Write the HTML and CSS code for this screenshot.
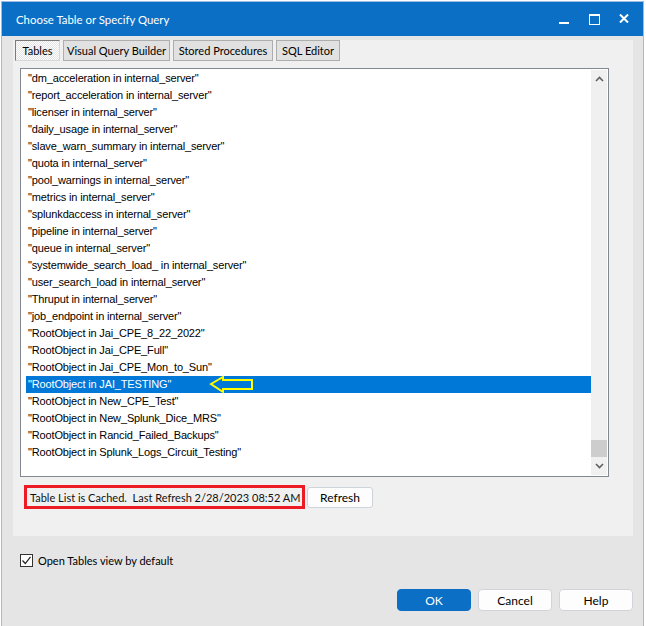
FILE: index.html
```html
<!DOCTYPE html>
<html lang="en">
<head>
    <meta charset="UTF-8">
    <meta name="viewport" content="width=device-width, initial-scale=1.0">
    <title>Choose Table or Specify Query</title>
    <link rel="stylesheet" href="styles.css">
</head>
<body>
    <div class="window">
        <div class="titlebar">
            <span class="title">Choose Table or Specify Query</span>
            <div class="controls">
                <span class="ctl ctl-min"></span>
                <span class="ctl ctl-max"></span>
                <span class="ctl ctl-close">
                    <svg width="10" height="9" viewBox="0 0 10 9">
                        <path d="M1 0.5 L9 8.5 M9 0.5 L1 8.5" stroke="#fff" stroke-width="2" fill="none"/>
                    </svg>
                </span>
            </div>
        </div>

        <div class="body">
            <div class="panel">
                <div class="tabs">
                    <button class="tab active">Tables</button>
                    <button class="tab tab-vqb">Visual Query Builder</button>
                    <button class="tab tab-sp">Stored Procedures</button>
                    <button class="tab tab-sql">SQL Editor</button>
                </div>

                <div class="listbox">
                    <ul class="items">
                        <li>"dm_acceleration in internal_server"</li>
                        <li>"report_acceleration in internal_server"</li>
                        <li>"licenser in internal_server"</li>
                        <li>"daily_usage in internal_server"</li>
                        <li>"slave_warn_summary in internal_server"</li>
                        <li>"quota in internal_server"</li>
                        <li>"pool_warnings in internal_server"</li>
                        <li>"metrics in internal_server"</li>
                        <li>"splunkdaccess in internal_server"</li>
                        <li>"pipeline in internal_server"</li>
                        <li>"queue in internal_server"</li>
                        <li>"systemwide_search_load_ in internal_server"</li>
                        <li>"user_search_load in internal_server"</li>
                        <li>"Thruput in internal_server"</li>
                        <li>"job_endpoint in internal_server"</li>
                        <li>"RootObject in Jai_CPE_8_22_2022"</li>
                        <li>"RootObject in Jai_CPE_Full"</li>
                        <li>"RootObject in Jai_CPE_Mon_to_Sun"</li>
                        <li class="selected">"RootObject in JAI_TESTING"</li>
                        <li>"RootObject in New_CPE_Test"</li>
                        <li>"RootObject in New_Splunk_Dice_MRS"</li>
                        <li>"RootObject in Rancid_Failed_Backups"</li>
                        <li>"RootObject in Splunk_Logs_Circuit_Testing"</li>
                    </ul>
                    <div class="scrollbar">
                        <svg class="chev" width="9" height="6" viewBox="0 0 9 6">
                            <path d="M1 5 L4.5 1.5 L8 5" stroke="#606060" stroke-width="1.6" fill="none"/>
                        </svg>
                        <div class="track"><div class="thumb"></div></div>
                        <svg class="chev" width="9" height="6" viewBox="0 0 9 6">
                            <path d="M1 1 L4.5 4.5 L8 1" stroke="#606060" stroke-width="1.6" fill="none"/>
                        </svg>
                    </div>

                    <!-- yellow annotation arrow drawn over the list -->
                    <svg class="annot-arrow" width="48" height="20" viewBox="0 0 48 20">
                        <polygon points="2,9 14,2 14,5 43,5 43,14 14,14 14,17" fill="none" stroke="#ffff00" stroke-width="2" stroke-linejoin="miter"/>
                    </svg>
                </div>

                <div class="status-row">
                    <span class="cached">Table List is Cached.&nbsp; Last Refresh 2/28/2023 08:52 AM</span>
                    <button class="refresh">Refresh</button>
                </div>
            </div>

            <label class="check">
                <span class="box">
                    <svg width="11" height="11" viewBox="0 0 11 11">
                        <path d="M1.5 5.5 L4.3 8.5 L9.5 1.8" stroke="#222" stroke-width="1.2" fill="none"/>
                    </svg>
                </span>
                Open Tables view by default
            </label>

            <div class="actions">
                <button class="btn btn-ok">OK</button>
                <button class="btn">Cancel</button>
                <button class="btn btn-help">Help</button>
            </div>
        </div>
    </div>
</body>
</html>
```

FILE: styles.css
```css
* {
    margin: 0;
    padding: 0;
    box-sizing: border-box;
}

body {
    background: #ffffff;
    font-family: Lato, 'Liberation Sans', sans-serif;
    font-size: 11px;
    color: #000;
    overflow: hidden;
}

button {
    font-family: Lato, 'Liberation Sans', sans-serif;
    font-size: 11px;
    color: #000;
    white-space: nowrap;
}

.window {
    margin: 1px 0 0 1px;
    width: 643px;
    height: 640px;
    border: 1px solid #9fbbe0;
    background: #e5e5e5;
}

.titlebar {
    height: 34px;
    background: #0b6fc6;
    display: flex;
    align-items: center;
    justify-content: space-between;
    color: #fff;
}

.title {
    padding-left: 14px;
    font-size: 11.4px;
    margin-top: 1px;
}

.controls {
    display: flex;
    align-items: center;
    height: 100%;
    padding-right: 4px;
}

.ctl {
    width: 30px;
    height: 100%;
    display: flex;
    align-items: center;
    justify-content: center;
}

.ctl-min::before {
    content: "";
    width: 10px;
    height: 2px;
    background: #fff;
    margin-top: 7px;
}

.ctl-max::before {
    content: "";
    width: 9px;
    height: 8px;
    border: 1px solid #fff;
    border-top-width: 2px;
}

.ctl-close svg {
    margin-top: -2px;
}

.body {
    padding: 4px 10px 0 11px;
}

.panel {
    height: 496px;
    background: #f0f0f0;
}

.tabs {
    display: flex;
    gap: 3px;
    padding-left: 2px;
}

.tab {
    height: 21px;
    background: #e1e1e1;
    border: 1px solid #adadad;
    padding: 0;
}

.tab.active {
    width: 45px;
    border-color: #7a7a7a #d8d8d8 #d8d8d8 #7a7a7a;
    background: repeating-conic-gradient(#ffffff 0 25%, #e3e3e3 0 50%) 0 0 / 2px 2px;
}

.tab-vqb { width: 107px; }
.tab-sp { width: 100px; }
.tab-sql { width: 64px; }

.listbox {
    position: relative;
    margin: 7px 0 0 7px;
    width: 589px;
    height: 409px;
    border: 1px solid #828790;
    background: #fff;
    display: flex;
    padding: 1px 1px 1px 0;
}

.items {
    list-style: none;
    flex: 1;
    padding-left: 5px;
    font-family: 'Liberation Sans', Arial, sans-serif;
    font-size: 11px;
    letter-spacing: -0.15px;
    color: #000;
}

.items li {
    height: 17px;
    line-height: 17px;
    padding-left: 2px;
    white-space: nowrap;
}

.items li.selected {
    background: #0078d7;
    color: #fff;
}

.scrollbar {
    width: 16px;
    background: #f0f0f0;
    display: flex;
    flex-direction: column;
    align-items: center;
}

.chev {
    margin: 6px 0;
}

.track {
    flex: 1;
    width: 100%;
    display: flex;
    flex-direction: column;
    justify-content: flex-end;
}

.thumb {
    height: 17px;
    background: #cdcdcd;
}

.annot-arrow {
    position: absolute;
    left: 188px;
    top: 306px;
}

.status-row {
    display: flex;
    align-items: center;
    gap: 2px;
    margin: 8px 0 0 11px;
}

.cached {
    border: 3px solid #ed1c24;
    height: 24px;
    width: 281px;
    padding-left: 3px;
    display: flex;
    align-items: center;
    white-space: nowrap;
    font-size: 11px;
    color: #111;
}

.refresh {
    width: 66px;
    height: 21px;
    font-size: 12px;
    background: #fdfdfd;
    border: 1px solid #cfd3da;
    border-radius: 3px;
}

.check {
    display: flex;
    align-items: center;
    gap: 5px;
    margin: 18px 0 0 7px;
    font-size: 11px;
    color: #000;
}

.box {
    width: 13px;
    height: 13px;
    border: 1px solid #333;
    background: #fff;
    display: flex;
    align-items: center;
    justify-content: center;
}

.actions {
    display: flex;
    justify-content: flex-end;
    gap: 7px;
    margin-top: 22px;
}

.btn {
    width: 74px;
    height: 22px;
    font-size: 12px;
    background: #fdfdfd;
    border: 1px solid #d0d4da;
    border-radius: 4px;
}

.btn-ok {
    background: #0b6fc6;
    border-color: #0b6fc6;
    color: #fff;
}
```
